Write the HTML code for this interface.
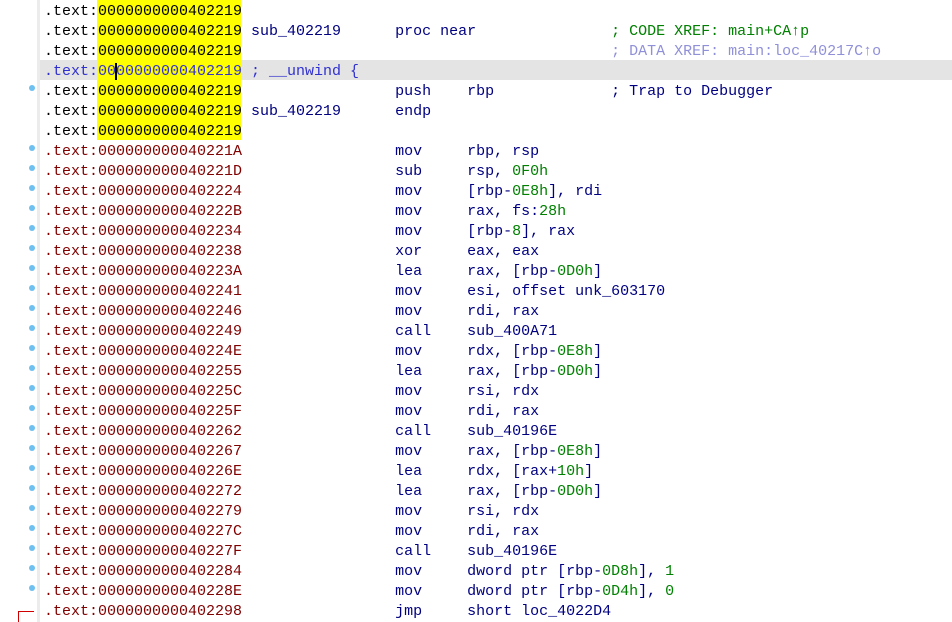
<!DOCTYPE html>
<html><head><meta charset="utf-8"><style>
html,body{margin:0;padding:0;background:#fff;width:952px;height:622px;overflow:hidden;position:relative}
.g{position:absolute;left:37px;top:0;width:3px;height:622px;background:#ececec}
.hl{position:absolute;left:40px;top:60px;width:912px;height:20px;background:#e4e4e4}
.y{position:absolute;left:97px;top:0;width:144px;height:140px;background:#ffff00}
.cur{position:absolute;left:115px;top:63px;width:2px;height:17px;background:#000}
pre{position:absolute;left:44px;top:2px;margin:0;font:15px/20px "Liberation Mono",monospace;color:#000080;white-space:pre}
.k{color:#000}.r{color:#800000}.b{color:#3030d0}.n{color:#008000}.cx{color:#008000}.dx{color:#9090d8}
.d{position:absolute;left:29px;width:6px;height:6px;border-radius:50%;background:#6ec0f0}
.rl{position:absolute;background:#d00000}
</style></head><body>
<div class="g"></div><div class="hl"></div><div class="y"></div>
<pre><span class="k">.text:0000000000402219</span>
<span class="k">.text:0000000000402219</span> sub_402219      proc near               <span class="cx">; CODE XREF: main+CA↑p</span>
<span class="k">.text:0000000000402219</span>                                         <span class="dx">; DATA XREF: main:loc_40217C↑o</span>
<span class="b">.text:0000000000402219 ; __unwind {</span>
<span class="k">.text:0000000000402219</span>                 push    rbp             ; Trap to Debugger
<span class="k">.text:0000000000402219</span> sub_402219      endp
<span class="k">.text:0000000000402219</span>
<span class="r">.text:000000000040221A</span>                 mov     rbp, rsp
<span class="r">.text:000000000040221D</span>                 sub     rsp, <span class="n">0F0h</span>
<span class="r">.text:0000000000402224</span>                 mov     [rbp-<span class="n">0E8h</span>], rdi
<span class="r">.text:000000000040222B</span>                 mov     rax, fs:<span class="n">28h</span>
<span class="r">.text:0000000000402234</span>                 mov     [rbp-<span class="n">8</span>], rax
<span class="r">.text:0000000000402238</span>                 xor     eax, eax
<span class="r">.text:000000000040223A</span>                 lea     rax, [rbp-<span class="n">0D0h</span>]
<span class="r">.text:0000000000402241</span>                 mov     esi, offset unk_603170
<span class="r">.text:0000000000402246</span>                 mov     rdi, rax
<span class="r">.text:0000000000402249</span>                 call    sub_400A71
<span class="r">.text:000000000040224E</span>                 mov     rdx, [rbp-<span class="n">0E8h</span>]
<span class="r">.text:0000000000402255</span>                 lea     rax, [rbp-<span class="n">0D0h</span>]
<span class="r">.text:000000000040225C</span>                 mov     rsi, rdx
<span class="r">.text:000000000040225F</span>                 mov     rdi, rax
<span class="r">.text:0000000000402262</span>                 call    sub_40196E
<span class="r">.text:0000000000402267</span>                 mov     rax, [rbp-<span class="n">0E8h</span>]
<span class="r">.text:000000000040226E</span>                 lea     rdx, [rax+<span class="n">10h</span>]
<span class="r">.text:0000000000402272</span>                 lea     rax, [rbp-<span class="n">0D0h</span>]
<span class="r">.text:0000000000402279</span>                 mov     rsi, rdx
<span class="r">.text:000000000040227C</span>                 mov     rdi, rax
<span class="r">.text:000000000040227F</span>                 call    sub_40196E
<span class="r">.text:0000000000402284</span>                 mov     dword ptr [rbp-<span class="n">0D8h</span>], <span class="n">1</span>
<span class="r">.text:000000000040228E</span>                 mov     dword ptr [rbp-<span class="n">0D4h</span>], <span class="n">0</span>
<span class="r">.text:0000000000402298</span>                 jmp     short loc_4022D4</pre>
<div class="cur"></div>
<div class="d" style="top:85px"></div>
<div class="d" style="top:145px"></div><div class="d" style="top:165px"></div><div class="d" style="top:185px"></div><div class="d" style="top:205px"></div><div class="d" style="top:225px"></div><div class="d" style="top:245px"></div><div class="d" style="top:265px"></div><div class="d" style="top:285px"></div><div class="d" style="top:305px"></div><div class="d" style="top:325px"></div><div class="d" style="top:345px"></div><div class="d" style="top:365px"></div><div class="d" style="top:385px"></div><div class="d" style="top:405px"></div><div class="d" style="top:425px"></div><div class="d" style="top:445px"></div><div class="d" style="top:465px"></div><div class="d" style="top:485px"></div><div class="d" style="top:505px"></div><div class="d" style="top:525px"></div><div class="d" style="top:545px"></div><div class="d" style="top:565px"></div><div class="d" style="top:585px"></div>
<div class="rl" style="left:18px;top:611px;width:16px;height:1px"></div>
<div class="rl" style="left:18px;top:611px;width:1px;height:11px"></div>
</body></html>
